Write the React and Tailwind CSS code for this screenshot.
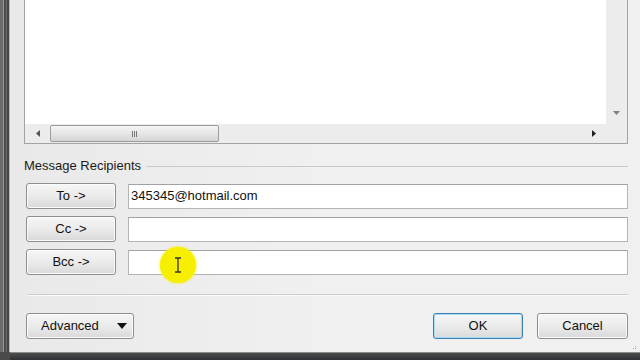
import React from "react";

function WinButton({ label, width, primary, children }) {
  return (
    <div
      className={`${width} h-[26px] rounded-[3px] border flex items-center justify-center text-[13px] text-[#111] bg-gradient-to-b from-[#f6f6f6] via-[#ebebeb] to-[#d9d9d9] ${
        primary
          ? "border-[#3c7fb1] shadow-[inset_0_0_0_1px_#a6dcf5]"
          : "border-[#8e8e8e] shadow-[inset_0_0_0_1px_#fbfbfb]"
      }`}
    >
      {label}
      {children}
    </div>
  );
}

function RecipientRow({ label, value, cursor }) {
  return (
    <div className="flex items-center h-[26px]">
      <WinButton label={label} width="w-[90px]" />
      <div className="relative ml-[12px] flex-1 h-[25px] bg-white border border-[#b4b4b4] border-t-[#a2a2a2] flex items-center pl-[2px] text-[13px] text-[#111]">
        {value}
        {cursor && (
          <div className="absolute left-[31px] top-[-4px] w-[36px] h-[36px] rounded-full bg-[#f6f000] shadow-[0_0_3px_#f6f000] flex items-center justify-center">
            <svg width="8" height="16" viewBox="0 0 8 16">
              <path d="M1 1h6M4 1v14M1 15h6" stroke="#333" strokeWidth="1.3" fill="none" />
            </svg>
          </div>
        )}
      </div>
    </div>
  );
}

export default function App() {
  return (
    <div
      className="w-[640px] h-[360px] overflow-hidden flex flex-col bg-[#f0f0f0]"
      style={{ fontFamily: '"Liberation Sans", Arial, sans-serif' }}
    >
      <div className="flex flex-1">
        {/* window frame, left */}
        <div className="flex w-[10px]">
          <div className="w-[3px] bg-[#6c6c6c]" />
          <div className="w-[1px] bg-[#9a9a9a]" />
          <div className="w-[2px] bg-[#4b4b4b]" />
          <div className="w-[1px] bg-[#6e6e6e]" />
          <div className="w-[2px] bg-[#474747]" />
          <div className="w-[1px] bg-[#b8b8b8]" />
        </div>

        <div className="relative flex-1 flex flex-col pl-[14px] pr-[12px] bg-gradient-to-r from-[#e9e9e9] via-[#f0f0f0] to-[#f0f0f0]">
          {/* message body with scrollbars */}
          <div className="h-[144px] border-x border-b border-[#a3a3a3] flex flex-col">
            <div className="flex flex-1">
              <div className="flex-1 bg-white" />
              <div className="w-[21px] bg-[#ececec] flex flex-col justify-end items-center pb-[9px]">
                <svg width="7" height="4" viewBox="0 0 7 4">
                  <path d="M0 0h7L3.5 4z" fill="#808080" />
                </svg>
              </div>
            </div>
            <div className="h-[19px] bg-[#ececec] flex items-center">
              <div className="w-[25px] flex justify-center">
                <svg width="4" height="7" viewBox="0 0 4 7">
                  <path d="M4 0v7L0 3.5z" fill="#555" />
                </svg>
              </div>
              <div className="w-[169px] h-[17px] rounded-[2px] border border-[#9c9c9c] bg-gradient-to-b from-[#f5f5f5] via-[#e6e6e6] to-[#d4d4d4] flex items-center justify-center gap-[1px]">
                <div className="w-[1px] h-[6px] bg-[#777]" />
                <div className="w-[1px] h-[6px] bg-[#777]" />
                <div className="w-[1px] h-[6px] bg-[#777]" />
              </div>
              <div className="flex-1" />
              <div className="w-[35px] flex justify-start">
                <svg width="4" height="7" viewBox="0 0 4 7">
                  <path d="M0 0v7L4 3.5z" fill="#222" />
                </svg>
              </div>
            </div>
          </div>

          {/* group label */}
          <div className="mt-[14px] h-[16px] flex items-center gap-[5px] text-[13px] text-[#1a1a1a]">
            <span>Message Recipients</span>
            <div className="flex-1 h-[1px] bg-[#c9c9c9]" />
          </div>

          <div className="mt-[9px] pl-[2px] flex flex-col gap-[7px]">
            <RecipientRow label="To ->" value="345345@hotmail.com" />
            <RecipientRow label="Cc ->" value="" />
            <RecipientRow label="Bcc ->" value="" cursor />
          </div>

          <div className="mt-[19px] ml-[4px] h-[1px] bg-[#cdcdcd] shadow-[0_1px_0_#fafafa]" />

          <div className="mt-[18px] pl-[2px] flex items-center">
            <WinButton label="" width="w-[108px]">
              <div className="flex-1 flex items-center pl-[14px] pr-[6px]">
                <span>Advanced</span>
                <div className="flex-1" />
                <svg width="10" height="6" viewBox="0 0 10 6">
                  <path d="M0 0h10L5 6z" fill="#111" />
                </svg>
              </div>
            </WinButton>
            <div className="flex-1" />
            <WinButton label="OK" width="w-[90px]" primary />
            <div className="w-[14px]" />
            <WinButton label="Cancel" width="w-[91px]" />
          </div>

          {/* size grip */}
          <div className="absolute right-[4px] bottom-[3px] grid grid-cols-2 gap-[1px]">
            <div className="w-[1px] h-[1px]" />
            <div className="w-[1px] h-[1px] bg-[#a8a8a8]" />
            <div className="w-[1px] h-[1px] bg-[#a8a8a8]" />
            <div className="w-[1px] h-[1px] bg-[#a8a8a8]" />
          </div>
        </div>
      </div>

      {/* window frame, bottom */}
      <div className="h-[8px] flex">
        <div className="w-[10px] bg-[#4a4a4a]" />
        <div className="flex-1 border-t border-[#8a8a8a] bg-gradient-to-b from-[#4c4c4c] to-[#2e3236]" />
      </div>
    </div>
  );
}
